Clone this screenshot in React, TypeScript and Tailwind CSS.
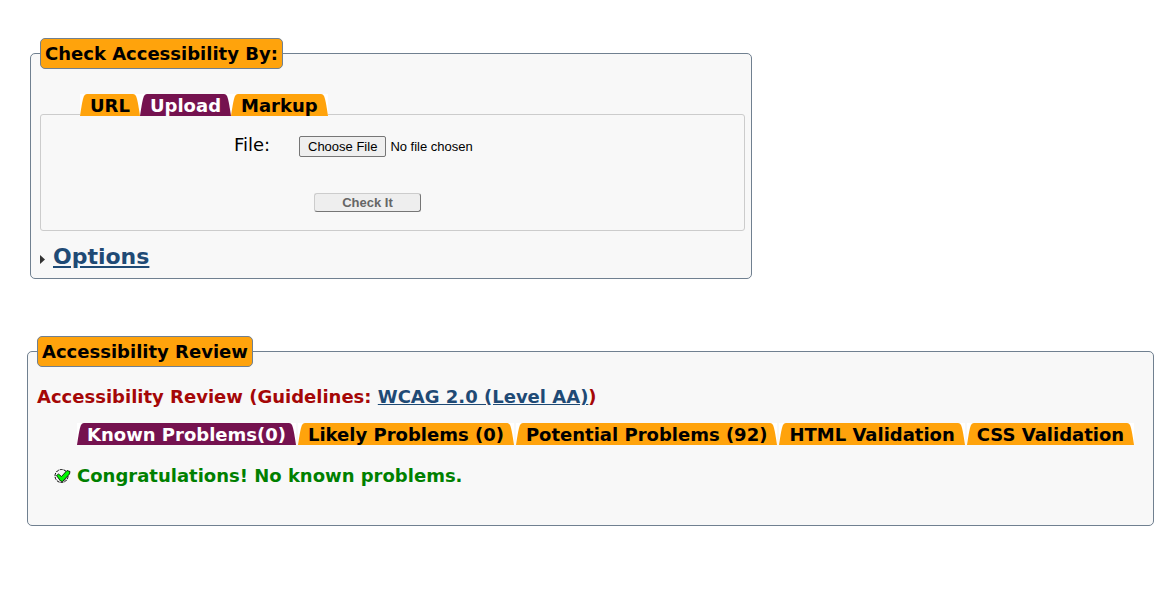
import { useState } from "react";

type TabProps = { label: string; active: boolean; onSelect: () => void };

function Tab({ label, active, onSelect }: TabProps) {
  const tone = active ? "bg-[#75124f] text-white" : "bg-[#ffa30c] text-black";
  const fill = active ? "fill-[#75124f]" : "fill-[#ffa30c]";
  return (
    <button
      type="button"
      role="tab"
      aria-selected={active}
      onClick={onSelect}
      className="flex h-[22px] shrink-0 bg-white font-bold whitespace-nowrap"
    >
      <svg className={`h-[22px] w-[10px] ${fill}`} viewBox="0 0 10 22" aria-hidden="true">
        <path d="M0 22 C1 15 2 9 3 5 C4 1 5 0 8 0 H10 V22 Z" />
      </svg>
      <span className={`h-[22px] leading-[23px] ${tone}`}>{label}</span>
      <svg className={`h-[22px] w-[10px] ${fill}`} viewBox="0 0 10 22" aria-hidden="true">
        <path d="M10 22 C9 15 8 9 7 5 C6 1 5 0 2 0 H0 V22 Z" />
      </svg>
    </button>
  );
}

type TabsProps = { labels: string[]; initial: number; gap: string };

function Tabs({ labels, initial, gap }: TabsProps) {
  const [current, setCurrent] = useState(initial);
  return (
    <div role="tablist" className={`relative z-10 flex pl-10 ${gap}`}>
      {labels.map((label, i) => (
        <Tab key={label} label={label} active={i === current} onSelect={() => setCurrent(i)} />
      ))}
    </div>
  );
}

const legendStyle =
  "rounded-[5px] border border-[#708090] bg-[#ffa30c] px-1 leading-[29px] font-bold text-black";
const groupStyle = "rounded-[5px] border border-[#708090] bg-[#f8f8f8]";

function CheckIcon() {
  return (
    <svg className="h-4 w-[17px]" viewBox="0 0 17 16" aria-hidden="true">
      <circle cx="7.5" cy="8" r="6.5" fill="#f4f4f4" stroke="#000" strokeDasharray="3 1" />
      <path d="M13 9 A6 6 0 0 1 7 14 L8 12 Z" fill="#999" />
      <path
        d="M2.5 7.5 L4.5 6 L7.5 8.5 L13 2.5 L16 3.5 L15.5 6 L8.5 13.5 L6.5 13 Z"
        fill="#00f800"
        stroke="#000"
        strokeWidth="0.8"
      />
    </svg>
  );
}

export default function App() {
  return (
    <main className="min-h-screen bg-white pt-[38px] pr-[9px] pb-8 pl-[27px] font-['DejaVu_Sans',Verdana,sans-serif] text-[18px] text-black">
      <form onSubmit={(e) => e.preventDefault()}>
        <fieldset className={`${groupStyle} ml-[3px] max-w-[722px] px-[9px] pb-1`}>
          <legend className={legendStyle}>Check Accessibility By:</legend>
          <div className="pt-[25px]">
            <Tabs labels={["URL", "Upload", "Markup"]} initial={1} gap="gap-0" />
          </div>
          <div className="-mt-0.5 mr-[-3px] rounded-[3px] border border-[#cccccc] pt-[17px] pb-[18px]">
            <div className="flex items-center">
              <label htmlFor="file" className="w-[258px] pr-[27px] pl-[193px] leading-6">
                File:
              </label>
              <input
                id="file"
                type="file"
                className="mt-1 h-[21px] w-[260px] font-['Liberation_Sans',Arial,sans-serif] text-[13px] leading-4 file:mr-1 file:h-[21px] file:rounded-[2px] file:border file:border-solid file:border-[#767676] file:bg-[#efefef] file:px-2 file:text-[13px]"
              />
            </div>
            <button
              type="submit"
              disabled
              className="mt-9 ml-[273px] block h-[19px] w-[107px] rounded-[3px] border border-t-[#cccccc] border-r-[#767676] border-b-[#767676] border-l-[#cccccc] bg-[#eeeeee] font-['Liberation_Sans',Arial,sans-serif] text-[13px] leading-4 font-bold text-[#666666]"
            >
              Check It
            </button>
          </div>
          <h2 className="mt-[9px] flex items-center text-[22px] leading-[34px] font-bold">
            <svg className="mt-1 mr-[7px] h-[9px] w-[6px]" viewBox="0 0 6 9" aria-hidden="true">
              <path d="M0 0 L5 4.5 L0 9 Z" fill="#333" />
            </svg>
            <a href="#options" className="text-[#1f4a75] underline">
              Options
            </a>
          </h2>
        </fieldset>
      </form>

      <fieldset className={`${groupStyle} mt-[57px] px-[9px] pb-[37px]`}>
        <legend className={legendStyle}>Accessibility Review</legend>
        <h3 className="mt-[18px] leading-6 font-bold text-[#a50707]">
          Accessibility Review (Guidelines:{" "}
          <a href="#wcag" className="text-[#1f4a75] underline">
            WCAG 2.0 (Level AA)
          </a>
          )
        </h3>
        <div className="mt-[14px]">
          <Tabs
            labels={[
              "Known Problems(0)",
              "Likely Problems (0)",
              "Potential Problems (92)",
              "HTML Validation",
              "CSS Validation",
            ]}
            initial={0}
            gap="gap-0.5"
          />
        </div>
        <p className="mt-[19px] flex items-center gap-1.5 pl-[17px] leading-6 font-bold text-[#008000]">
          <CheckIcon />
          Congratulations! No known problems.
        </p>
      </fieldset>
    </main>
  );
}
